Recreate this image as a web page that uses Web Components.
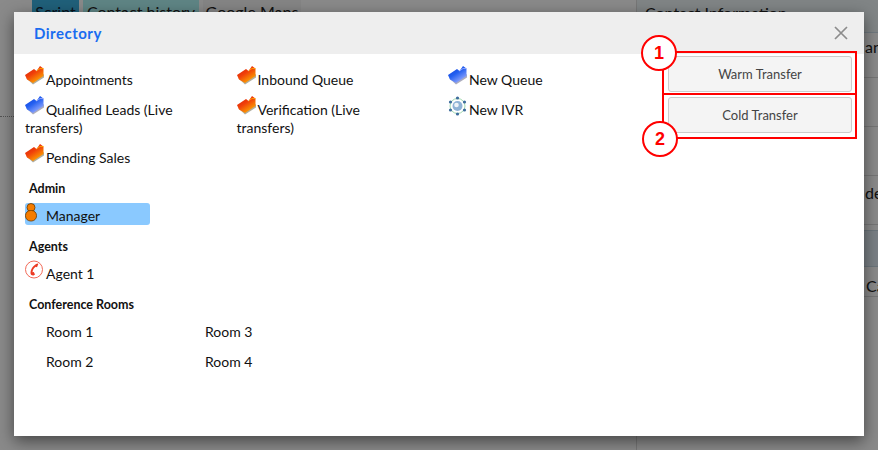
<!DOCTYPE html>
<html>
<head>
<meta charset="utf-8">
<title>Directory</title>
<style>
  html, body { margin: 0; height: 100%; }
  body { font-family: "Lato", "Noto Sans", sans-serif; overflow: hidden; }
</style>
</head>
<body>
<page-backdrop></page-backdrop>
<directory-modal heading="Directory">
  <dir-entry slot="groups" icon="folder-red">Appointments</dir-entry>
  <dir-entry slot="groups" icon="folder-red">Inbound Queue</dir-entry>
  <dir-entry slot="groups" icon="folder-blue">New Queue</dir-entry>
  <dir-entry slot="groups" icon="folder-blue">Qualified Leads (Live transfers)</dir-entry>
  <dir-entry slot="groups" icon="folder-red">Verification (Live transfers)</dir-entry>
  <dir-entry slot="groups" icon="ivr">New IVR</dir-entry>
  <dir-entry slot="groups" icon="folder-red">Pending Sales</dir-entry>

  <dir-section slot="people" title="Admin">
    <dir-entry icon="person" selected>Manager</dir-entry>
  </dir-section>
  <dir-section slot="people" title="Agents">
    <dir-entry icon="phone">Agent 1</dir-entry>
  </dir-section>
  <dir-section slot="people" title="Conference Rooms">
    <room-grid>
      <dir-entry>Room 1</dir-entry>
      <dir-entry>Room 3</dir-entry>
      <dir-entry>Room 2</dir-entry>
      <dir-entry>Room 4</dir-entry>
    </room-grid>
  </dir-section>

  <transfer-button slot="actions">Warm Transfer</transfer-button>
  <transfer-button slot="actions">Cold Transfer</transfer-button>
</directory-modal>
<callout-marks></callout-marks>

<script>
const folder = (c1, c2, c3, shadow) => `<svg width="20" height="19" viewBox="0 0 20 19">
      <defs><linearGradient id="g" x1="0" y1="0" x2=".7" y2="1"><stop offset="0" stop-color="${c1}"/><stop offset=".5" stop-color="${c2}"/><stop offset="1" stop-color="${c3}"/></linearGradient></defs>
      <path d="M1 12l7 6.500 11-7V8L8 15z" fill="${shadow}" opacity=".7"/>
      <path d="M0 9l9-6 2.500 2L15 0l3.500 2.500V10L8 17 2 13.500z" fill="url(#g)"/>
      <path d="M11.500 5 15 2.500l3.500 0" fill="none" stroke="${c3}" stroke-width=".8"/>
    </svg>`;

const ICONS = {
  'folder-red': folder('#d41806', '#f0400a', '#ffb000', '#8f8a78'),
  'folder-blue': folder('#0838dc', '#2460f0', '#a0b0ff', '#8a8aa0'),
  'ivr': `<svg width="20" height="20" viewBox="0 0 20 20">
      <circle cx="9.500" cy="10" r="7.500" fill="none" stroke="#9fd8ae" stroke-width="1"/>
      <circle cx="9.500" cy="10" r="5" fill="#8fb3d6"/>
      <circle cx="8.500" cy="9" r="2.300" fill="#eef3f8"/>
      <g fill="#3d6c9c">
        <circle cx="9.500" cy="2" r="1.600"/><circle cx="16.500" cy="6" r="1.600"/><circle cx="16.500" cy="14" r="1.600"/>
        <circle cx="9.500" cy="18" r="1.600"/><circle cx="2.500" cy="14" r="1.600"/><circle cx="2.500" cy="6" r="1.600"/>
      </g>
    </svg>`,
  'person': `<svg width="13" height="19" viewBox="0 0 13 19">
      <circle cx="6" cy="4.500" r="4" fill="#f57c00" stroke="#6a3a00" stroke-width=".8"/>
      <rect x=".5" y="7.500" width="11" height="10.500" rx="5" fill="#f57c00" stroke="#6a3a00" stroke-width=".8"/>
    </svg>`,
  'phone': `<svg width="19" height="19" viewBox="0 0 19 19">
      <circle cx="9" cy="9.500" r="8.500" fill="#fff" stroke="#f26a58" stroke-width="1"/>
      <path d="M13 3.500C9.500 4 6 8 5.500 12.500c-.2 1.800 1 3.200 3 3l1.500-1-1.200-2.500-1.300.3c0-2.300 1.500-4.500 3.200-5.600l1.300.6 1.300-3.300z" fill="#ec3a22"/>
    </svg>`
};

// dimmed page that sits behind the modal
class PageBackdrop extends HTMLElement {
  constructor() {
    super();
    this.attachShadow({ mode: 'open' });
    this.shadowRoot.innerHTML = `
      <style>
        :host { position: fixed; inset: 0; display: block; background: #fff; color: #222; font-size: 16px; overflow: hidden; }
        .tabs { display: flex; gap: 4px; margin-left: 32px; width: 600px; height: 30px; }
        .tabs span { line-height: 24px; text-align: center; white-space: nowrap; }
        .t1 { width: 47px; background: #3bb2e2; color: #123; }
        .t2 { width: 116px; background: #b0f5f5; }
        .t3 { width: 98px; background: #f5f5f5; }
        .side { position: absolute; left: 636px; top: 0; right: 0; bottom: 0; border-left: 1px solid #ddd; }
        .side .head { position: absolute; left: 0; right: 0; top: 0; height: 32px; background: #eef5f8; border-bottom: 1px solid #cfe0ea; }
        .side .line { position: absolute; left: 0; right: 0; border-top: 1px solid #ddd; }
        .side .band { position: absolute; left: 0; right: 0; top: 230px; height: 35px; background: #e2ecf6; border-top: 1px solid #c6d8e4; border-bottom: 1px solid #c6d8e4; }
        .side span { position: absolute; white-space: nowrap; }
        .dots { position: absolute; left: 0; width: 14px; top: 116px; border-top: 1px dotted #999; }
        .veil { position: absolute; inset: 0; background: #000; opacity: .46; }
      </style>
      <div class="tabs"><span class="t1">Script</span><span class="t2">Contact history</span><span class="t3">Google Maps</span></div>
      <div class="dots"></div>
      <div class="side">
        <div class="head"></div>
        <span style="left:8px;top:3px">Contact Information</span>
        <span style="left:228px;top:37px">an</span>
        <div class="line" style="top:77px"></div>
        <div class="line" style="top:126px"></div>
        <div class="line" style="top:175px"></div>
        <span style="left:228px;top:183px">de</span>
        <div class="line" style="top:224px"></div>
        <div class="band"></div>
        <span style="left:229px;top:276px">Ca</span>
        <div class="line" style="top:296px"></div>
      </div>
      <div class="veil"></div>
    `;
  }
}

class DirectoryModal extends HTMLElement {
  constructor() {
    super();
    this.attachShadow({ mode: 'open' });
    const heading = this.getAttribute('heading') || '';
    this.shadowRoot.innerHTML = `
      <style>
        :host { position: fixed; left: 14px; top: 12px; width: 850px; height: 424px; display: flex; flex-direction: column; background: #fff; box-shadow: 0 5px 15px rgba(0,0,0,.5); color: #111; }
        header { flex: none; height: 42px; box-sizing: border-box; padding: 0 0 0 20px; background: #eee; display: flex; align-items: center; justify-content: space-between; }
        h4 { margin: 0; font-size: 15px; font-weight: 700; color: #1a6cf0; letter-spacing: .5px; }
        .close { width: 14px; height: 14px; margin-right: 16px; }
        .body { flex: 1; display: flex; }
        .main { width: 636px; box-sizing: border-box; padding: 11px 0 0 11px; }
        .groups { display: grid; grid-template-columns: repeat(3, 211.5px); }
        .actions { margin: 2px 0 0 18px; width: 184px; display: flex; flex-direction: column; gap: 5px; }
      </style>
      <header>
        <h4>${heading}</h4>
        <svg class="close" viewBox="0 0 14 14"><path d="M1 1l12 12M13 1L1 13" stroke="#8c8c8c" stroke-width="1.700" fill="none"/></svg>
      </header>
      <div class="body">
        <div class="main">
          <div class="groups"><slot name="groups"></slot></div>
          <slot name="people"></slot>
        </div>
        <div class="actions"><slot name="actions"></slot></div>
      </div>
    `;
  }
}

class DirEntry extends HTMLElement {
  constructor() {
    super();
    this.attachShadow({ mode: 'open' });
    const icon = ICONS[this.getAttribute('icon')] || '';
    this.shadowRoot.innerHTML = `
      <style>
        :host { display: block; font-size: 14px; line-height: 18px; padding: 6px 30px 6px 0; }
        :host([selected]) { padding: 0; width: 125px; margin: 5px 0 12px; background: #8ac9ff; border-radius: 3px; height: 22px; line-height: 26px; }
        .icon { display: inline-block; width: 21px; height: 0; position: relative; }
        .icon svg { position: absolute; left: 0; top: -19px; }
        :host([selected]) .icon svg { top: -18px; }
      </style>
      <span class="icon">${icon}</span><slot></slot>
    `;
  }
}

class DirSection extends HTMLElement {
  constructor() {
    super();
    this.attachShadow({ mode: 'open' });
    this.shadowRoot.innerHTML = `
      <style>
        :host { display: block; margin-top: 6px; }
        h5 { margin: 0 0 3px; padding: 1px 0 0 4px; font-size: 12.500px; line-height: 18px; font-weight: 700; color: #111; }
      </style>
      <h5>${this.getAttribute('title') || ''}</h5>
      <slot></slot>
    `;
  }
}

class RoomGrid extends HTMLElement {
  constructor() {
    super();
    this.attachShadow({ mode: 'open' });
    this.shadowRoot.innerHTML = `
      <style>
        :host { display: grid; grid-template-columns: repeat(2, 159px); width: 318px; }
      </style>
      <slot></slot>
    `;
  }
}

class TransferButton extends HTMLElement {
  constructor() {
    super();
    this.attachShadow({ mode: 'open' });
    this.shadowRoot.innerHTML = `
      <style>
        :host { display: block; }
        button { display: block; width: 100%; height: 36px; padding: 0; box-sizing: border-box; background: #f4f4f4; border: 1px solid #ccc; border-radius: 3px; color: #444; font: 13px "Lato", "Noto Sans", sans-serif; }
      </style>
      <button><slot></slot></button>
    `;
  }
}

// red annotation boxes and numbered circles drawn over the screenshot
class CalloutMarks extends HTMLElement {
  constructor() {
    super();
    this.attachShadow({ mode: 'open' });
    this.shadowRoot.innerHTML = `
      <style>
        :host { position: fixed; inset: 0; display: block; pointer-events: none; font-family: "Liberation Sans", sans-serif; }
        .box { position: absolute; left: 662px; width: 191px; border: 2px solid #f00; }
        .b1 { top: 51px; height: 40px; }
        .b2 { top: 95px; height: 42px; border-top: 0; }
        .num { position: absolute; width: 32px; height: 32px; border: 2px solid #f00; border-radius: 50%; background: #fff; color: #f00; font-size: 18px; font-weight: 700; line-height: 32px; text-align: center; }
      </style>
      <div class="box b1"></div>
      <div class="box b2"></div>
      <div class="num" style="left:641px;top:35px">1</div>
      <div class="num" style="left:642px;top:121px">2</div>
    `;
  }
}

customElements.define('page-backdrop', PageBackdrop);
customElements.define('directory-modal', DirectoryModal);
customElements.define('dir-entry', DirEntry);
customElements.define('dir-section', DirSection);
customElements.define('room-grid', RoomGrid);
customElements.define('transfer-button', TransferButton);
customElements.define('callout-marks', CalloutMarks);
</script>
</body>
</html>
